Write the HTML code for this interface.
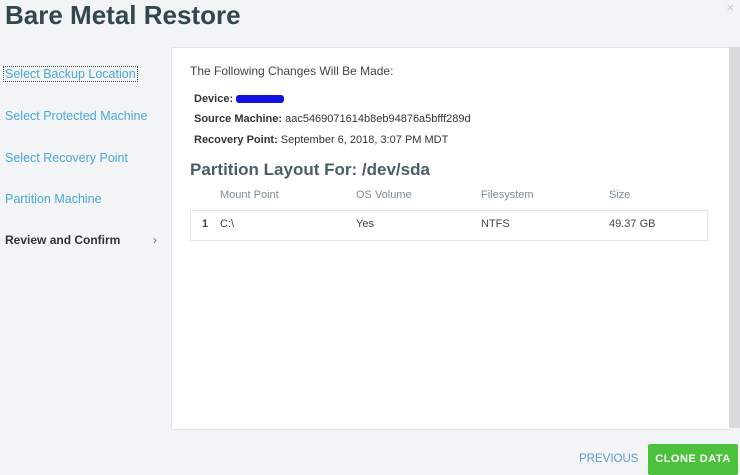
<!DOCTYPE html>
<html><head><style>
body{margin:0;width:740px;height:475px;background:#f3f4f6;font-family:"Liberation Sans",sans-serif;position:relative;overflow:hidden}
.a{position:absolute;white-space:nowrap}
h1{position:absolute;left:5px;top:0px;margin:0;font-size:26px;color:#33474f;font-weight:bold}
.nav{color:#4aa8d6;font-size:12.5px;left:5px}
.panel{position:absolute;left:171px;top:47px;width:558px;height:381px;background:#fff;border:1px solid #e3e5e8}
.sb{position:absolute;left:729px;top:47px;width:11px;height:381px;background:#d9dadc}
.lbl{font-size:11px;color:#333}
b{color:#333}
.th{font-size:11px;color:#7d8a92;top:189px}
.row{position:absolute;left:190px;top:210px;width:516px;height:29px;border:1px solid #e0e2e4}
.td{font-size:11px;color:#444;top:218px}
</style></head><body>
<h1>Bare Metal Restore</h1>
<div class="a" style="right:6px;top:0;color:#ccc;font-size:13px">×</div>
<div class="a nav" style="top:67px;outline:1px dotted #444;padding:0 1px;left:4px">Select Backup Location</div>
<div class="a nav" style="top:109px">Select Protected Machine</div>
<div class="a nav" style="top:151px">Select Recovery Point</div>
<div class="a nav" style="top:192px">Partition Machine</div>
<div class="a" style="left:5px;top:233px;font-size:12px;font-weight:bold;color:#333">Review and Confirm</div>
<div class="a" style="left:153px;top:233px;font-size:12px;color:#666">›</div>
<div class="panel"></div><div class="sb"></div>
<div class="a" style="left:190px;top:64px;font-size:12px;color:#444">The Following Changes Will Be Made:</div>
<div class="a lbl" style="left:194px;top:93px"><b>Device:</b> <span style="display:inline-block;width:48px;height:8px;background:#1010e0;border-radius:3px;vertical-align:middle"></span></div>
<div class="a lbl" style="left:194px;top:113px"><b>Source Machine:</b> aac5469071614b8eb94876a5bfff289d</div>
<div class="a lbl" style="left:194px;top:134px"><b>Recovery Point:</b> September 6, 2018, 3:07 PM MDT</div>
<div class="a" style="left:190px;top:160px;font-size:17px;font-weight:bold;color:#4a5e68">Partition Layout For: /dev/sda</div>
<div class="a th" style="left:220px">Mount Point</div>
<div class="a th" style="left:356px">OS Volume</div>
<div class="a th" style="left:481px">Filesystem</div>
<div class="a th" style="left:609px">Size</div>
<div class="row"></div>
<div class="a td" style="left:202px;font-weight:bold">1</div>
<div class="a td" style="left:220px">C:\</div>
<div class="a td" style="left:356px">Yes</div>
<div class="a td" style="left:481px">NTFS</div>
<div class="a td" style="left:609px">49.37 GB</div>
<div class="a" style="left:579px;top:453px;font-size:11.5px;color:#5b9bd5">PREVIOUS</div>
<div class="a" style="left:648px;top:444px;width:90px;height:31px;background:#4cc23c;border-radius:2px;color:#fff;font-size:11px;font-weight:bold;text-align:center;line-height:31px;letter-spacing:0.5px">CLONE DATA</div>
</body></html>
